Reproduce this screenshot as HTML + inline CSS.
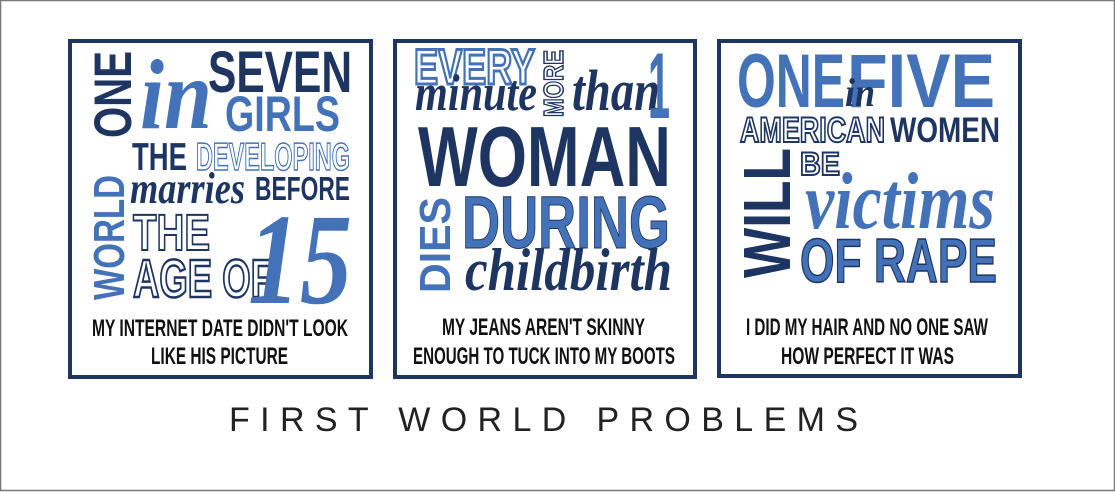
<!DOCTYPE html>
<html><head><meta charset="utf-8"><style>
html,body{margin:0;padding:0;background:#fff;}
svg{display:block}
.b{font-family:"Liberation Sans",sans-serif;font-weight:bold}
.s{font-family:"Liberation Serif",serif;font-style:italic;font-weight:bold}
.k{font-family:"Liberation Sans",sans-serif;font-weight:bold;fill:#111}
</style></head><body>
<svg width="1115" height="492" viewBox="0 0 1115 492" xmlns="http://www.w3.org/2000/svg">
<rect x="0.5" y="0.5" width="1114" height="490" fill="#fff" stroke="#777" stroke-width="1.5"/>
<g fill="none" stroke="#1e3461" stroke-width="4">
<rect x="70" y="41" width="301" height="336"/>
<rect x="395" y="41" width="300" height="336"/>
<rect x="719" y="41" width="301" height="335"/>
</g>
<!-- panel 1 -->
<g lengthAdjust="spacingAndGlyphs">
<text class="b" fill="#1e3461" font-size="53" transform="translate(131,138) rotate(-90)" textLength="87" lengthAdjust="spacingAndGlyphs">ONE</text>
<text class="s" fill="#4472b8" font-size="100" x="140" y="128" textLength="72" lengthAdjust="spacingAndGlyphs">in</text>
<text class="b" fill="#1e3461" font-size="58" x="208" y="92" textLength="144" lengthAdjust="spacingAndGlyphs">SEVEN</text>
<text class="b" fill="#4472b8" font-size="50" x="225" y="131" textLength="115" lengthAdjust="spacingAndGlyphs">GIRLS</text>
<text class="b" fill="#1e3461" font-size="39" x="132" y="170" textLength="55" lengthAdjust="spacingAndGlyphs">THE</text>
<text class="b" fill="#fff" stroke="#4472b8" stroke-width="1.5" font-size="39" x="196" y="170" textLength="154" lengthAdjust="spacingAndGlyphs">DEVELOPING</text>
<text class="b" fill="#4472b8" font-size="44" transform="translate(124,300) rotate(-90)" textLength="125" lengthAdjust="spacingAndGlyphs">WORLD</text>
<text class="s" fill="#1e3461" font-size="44" x="130" y="203" textLength="115" lengthAdjust="spacingAndGlyphs">marries</text>
<text class="b" fill="#1e3461" font-size="33" x="255" y="200" textLength="95" lengthAdjust="spacingAndGlyphs">BEFORE</text>
<text class="b" fill="#fff" stroke="#1e3461" stroke-width="2" font-size="51" x="133" y="250" textLength="77" lengthAdjust="spacingAndGlyphs">THE</text>
<text class="b" fill="#fff" stroke="#1e3461" stroke-width="2.5" font-size="54" x="133" y="297" textLength="140" lengthAdjust="spacingAndGlyphs">AGE OF</text>
<text class="s" fill="#4472b8" font-size="130" x="248" y="303" textLength="104" lengthAdjust="spacingAndGlyphs">15</text>
<text class="k" font-size="24" x="92" y="336" textLength="256" lengthAdjust="spacingAndGlyphs">MY INTERNET DATE DIDN'T LOOK</text>
<text class="k" font-size="24" x="151" y="364" textLength="137" lengthAdjust="spacingAndGlyphs">LIKE HIS PICTURE</text>
</g>
<!-- panel 2 -->
<text class="b" fill="#fff" stroke="#4472b8" stroke-width="3" font-size="50" x="414" y="84" textLength="121" lengthAdjust="spacingAndGlyphs">EVERY</text>
<text class="s" fill="#1e3461" font-size="52" x="415" y="110" textLength="122" lengthAdjust="spacingAndGlyphs">minute</text>
<text class="b" fill="#fff" stroke="#1e3461" stroke-width="1.5" font-size="28" transform="translate(563,117) rotate(-90)" textLength="67" lengthAdjust="spacingAndGlyphs">MORE</text>
<text class="s" fill="#1e3461" font-size="58" x="572" y="110" textLength="88" lengthAdjust="spacingAndGlyphs">than</text>
<text class="b" fill="#4472b8" font-size="94" x="648" y="118" textLength="22" lengthAdjust="spacingAndGlyphs">1</text>
<text class="b" fill="#1e3461" font-size="85" x="418" y="186" textLength="253" lengthAdjust="spacingAndGlyphs">WOMAN</text>
<text class="b" fill="#4472b8" font-size="44" transform="translate(450,293) rotate(-90)" textLength="96" lengthAdjust="spacingAndGlyphs">DIES</text>
<text class="b" fill="#4472b8" stroke="#1e3461" stroke-width="1" font-size="74" x="462" y="248" textLength="208" lengthAdjust="spacingAndGlyphs">DURING</text>
<text class="s" fill="#1e3461" font-size="60" x="465" y="290" textLength="207" lengthAdjust="spacingAndGlyphs">childbirth</text>
<text class="k" font-size="24" x="442" y="335" textLength="203" lengthAdjust="spacingAndGlyphs">MY JEANS AREN'T SKINNY</text>
<text class="k" font-size="24" x="413" y="364" textLength="262" lengthAdjust="spacingAndGlyphs">ENOUGH TO TUCK INTO MY BOOTS</text>
<!-- panel 3 -->
<text class="b" fill="#4472b8" font-size="76" x="737" y="107" textLength="108" lengthAdjust="spacingAndGlyphs">ONE</text>
<text class="b" fill="#4472b8" font-size="76" x="847" y="107" textLength="148" lengthAdjust="spacingAndGlyphs">FIVE</text>
<text class="s" fill="#1e3461" font-size="40" x="845" y="106" textLength="30" lengthAdjust="spacingAndGlyphs">in</text>
<text class="b" fill="#fff" stroke="#1e3461" stroke-width="2" font-size="35" x="740" y="142" textLength="145" lengthAdjust="spacingAndGlyphs">AMERICAN</text>
<text class="b" fill="#1e3461" font-size="35" x="890" y="142" textLength="110" lengthAdjust="spacingAndGlyphs">WOMEN</text>
<text class="b" fill="#1e3461" font-size="67" transform="translate(790,278) rotate(-90)" textLength="130" lengthAdjust="spacingAndGlyphs">WILL</text>
<text class="b" fill="#fff" stroke="#1e3461" stroke-width="2" font-size="32" x="800" y="175" textLength="40" lengthAdjust="spacingAndGlyphs">BE</text>
<text class="s" fill="#4472b8" font-size="80" x="805" y="228" textLength="190" lengthAdjust="spacingAndGlyphs">victims</text>
<text class="b" fill="#4472b8" stroke="#1e3461" stroke-width="1.5" font-size="62" x="800" y="282" textLength="197" lengthAdjust="spacingAndGlyphs">OF RAPE</text>
<text class="k" font-size="24" x="746" y="335" textLength="242" lengthAdjust="spacingAndGlyphs">I DID MY HAIR AND NO ONE SAW</text>
<text class="k" font-size="24" x="781" y="364" textLength="173" lengthAdjust="spacingAndGlyphs">HOW PERFECT IT WAS</text>
<!-- title -->
<text font-family="Liberation Sans, sans-serif" font-size="34" fill="#222" x="229" y="431" textLength="629" lengthAdjust="spacing">FIRST WORLD PROBLEMS</text>
</svg>
</body></html>
